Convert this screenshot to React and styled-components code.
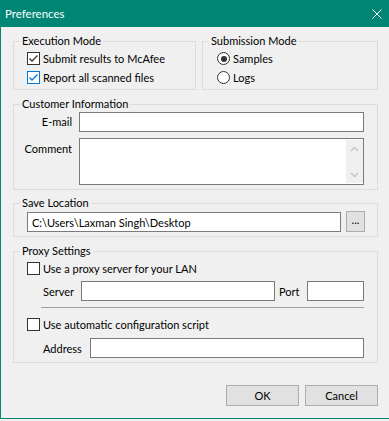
import styled, { createGlobalStyle } from "styled-components"

const Global = createGlobalStyle`
body {
  margin: 0;
  background: #f0f0f0;
}
* { box-sizing: border-box; }
`

const Window = styled.div`
width: 389px;
height: 419px;
display: flex;
flex-direction: column;
background: #f0f0f0;
border-left: 1px solid #018574;
border-bottom: 1px solid #018574;
font-family: Lato, sans-serif;
font-size: 11px;
color: #000;
`
const TitleBar = styled.div`
height: 27px;
flex: none;
display: flex;
align-items: center;
justify-content: space-between;
padding: 0 7px 0 4px;
background: #018574;
color: #fff;
font-size: 11.5px;
`
const Content = styled.div`
flex: 1;
display: flex;
flex-direction: column;
padding: 6px 11px 0 12px;
`
const TopRow = styled.div`
display: flex;
gap: 6px;
`
const Group = styled.fieldset`
margin: ${p => p.$mt || 0}px 0 0 0;
padding: 0;
min-width: 0;
border: 1px solid #dcdcdc;
width: ${p => p.$w ? p.$w + "px" : "auto"};
flex: ${p => p.$fill ? "1 1 0" : "none"};
`
const Legend = styled.legend`
margin-left: 6px;
padding: 0 2px;
line-height: 16px;
height: 16px;
`
const Stack = styled.div`
display: flex;
flex-direction: column;
padding: ${p => p.$pad};
`
const OptionRow = styled.label`
display: flex;
align-items: center;
gap: 3px;
height: 19px;
margin-top: ${p => p.$mt || 0}px;
white-space: nowrap;
`
const Box = styled.span`
width: 13px;
height: 13px;
flex: none;
display: flex;
align-items: center;
justify-content: center;
border: 1px solid ${p => p.$blue ? "#0078d7" : "#333"};
background: #fff;
`
const Round = styled.span`
width: 13px;
height: 13px;
flex: none;
display: flex;
align-items: center;
justify-content: center;
border: 1px solid #333;
border-radius: 50%;
background: #fff;
`
const Dot = styled.span`
width: 6px;
height: 6px;
border-radius: 50%;
background: #333;
`
const FormGrid = styled.div`
display: grid;
grid-template-columns: 58px 1fr;
column-gap: 7px;
row-gap: 6px;
padding: 0 13px 4px 0;
`
const FieldLabel = styled.span`
text-align: right;
line-height: 16px;
align-self: ${p => p.$top ? "start" : "center"};
margin-top: ${p => p.$top ? 3 : 0}px;
`
const TextBox = styled.input`
height: 20px;
width: ${p => p.$w ? p.$w + "px" : "auto"};
flex: ${p => p.$w ? "none" : 1};
min-width: 0;
margin: 0;
margin-top: ${p => p.$mt || 0}px;
padding: 0 4px;
border: 1px solid #7a7a7a;
background: #fff;
font-family: Lato, sans-serif;
font-size: 11px;
color: #000;
outline: none;
`
const MemoBox = styled.div`
height: 47px;
display: flex;
justify-content: flex-end;
border: 1px solid #7a7a7a;
background: #fff;
padding: 1px 0;
`
const ScrollBar = styled.div`
width: 17px;
display: flex;
flex-direction: column;
justify-content: space-between;
background: #f0f0f0;
`
const ScrollArrow = styled.div`
height: 17px;
display: flex;
align-items: center;
justify-content: center;
`
const Line = styled.div`
display: flex;
align-items: ${p => p.$align || "center"};
gap: ${p => p.$gap || 0}px;
padding: ${p => p.$pad || 0};
margin-top: ${p => p.$mt || 0}px;
`
const InlineLabel = styled.span`
width: ${p => p.$w}px;
flex: none;
padding-left: ${p => p.$pl || 0}px;
white-space: nowrap;
`
const BrowseButton = styled.button`
width: 19px;
height: 21px;
flex: none;
margin: 0;
padding: 0 0 4px;
border: 1px solid #adadad;
background: #e1e1e1;
font-family: Lato, sans-serif;
font-size: 11px;
color: #000;
`
const Separator = styled.div`
height: 1px;
margin: 6px 0 0 14px;
background: #a0a0a0;
`
const Footer = styled.div`
display: flex;
justify-content: flex-end;
gap: 6px;
margin-top: 22px;
`
const DialogButton = styled.button`
width: 73px;
height: 21px;
margin: 0;
padding: 0;
border: 1px solid #adadad;
background: #e1e1e1;
font-family: Lato, sans-serif;
font-size: 11px;
color: #000;
`

function Check({ checked, blue }) {
    const c = blue ? "#0078d7" : "#333"
    return (
        <Box $blue={blue}>
            {checked && (
                <svg width="11" height="11" viewBox="0 0 11 11">
                    <path d="M1.5 5.5 L4 8 L9.5 2.5" fill="none" stroke={c} strokeWidth="1.3" />
                </svg>
            )}
        </Box>
    )
}

function Radio({ checked }) {
    return <Round>{checked && <Dot />}</Round>
}

function Chevron({ up }) {
    return (
        <svg width="9" height="6" viewBox="0 0 9 6">
            <path d={up ? "M1 5 L4.5 1.5 L8 5" : "M1 1 L4.5 4.5 L8 1"} fill="none" stroke="#c2c2c2" strokeWidth="1.3" />
        </svg>
    )
}

export default function App() {
    return (
        <Window>
            <Global />
            <TitleBar>
                <span>Preferences</span>
                <svg width="10" height="10" viewBox="0 0 10 10">
                    <path d="M0.5 0.5 L9.5 9.5 M9.5 0.5 L0.5 9.5" stroke="#fff" strokeWidth="1" />
                </svg>
            </TitleBar>
            <Content>
                <TopRow>
                    <Group $w={183}>
                        <Legend>Execution Mode</Legend>
                        <Stack $pad="0 0 2px 13px">
                            <OptionRow><Check checked />Submit results to McAfee</OptionRow>
                            <OptionRow><Check checked blue />Report all scanned files</OptionRow>
                        </Stack>
                    </Group>
                    <Group $fill>
                        <Legend>Submission Mode</Legend>
                        <Stack $pad="0 0 2px 14px">
                            <OptionRow><Radio checked />Samples</OptionRow>
                            <OptionRow><Radio />Logs</OptionRow>
                        </Stack>
                    </Group>
                </TopRow>

                <Group $mt={6}>
                    <Legend>Customer Information</Legend>
                    <FormGrid>
                        <FieldLabel>E-mail</FieldLabel>
                        <TextBox />
                        <FieldLabel $top>Comment</FieldLabel>
                        <MemoBox>
                            <ScrollBar>
                                <ScrollArrow><Chevron up /></ScrollArrow>
                                <ScrollArrow><Chevron /></ScrollArrow>
                            </ScrollBar>
                        </MemoBox>
                    </FormGrid>
                </Group>

                <Group $mt={5}>
                    <Legend>Save Location</Legend>
                    <Line $align="flex-start" $gap={5} $pad="0 12px 4px 13px">
                        <TextBox $mt={1} defaultValue="C:\Users\Laxman Singh\Desktop" readOnly />
                        <BrowseButton>...</BrowseButton>
                    </Line>
                </Group>

                <Group $mt={6}>
                    <Legend>Proxy Settings</Legend>
                    <Stack $pad="0 13px 4px 13px">
                        <OptionRow><Check />Use a proxy server for your LAN</OptionRow>
                        <Line $mt={3} $pad="0 0 0 16px">
                            <InlineLabel $w={38}>Server</InlineLabel>
                            <TextBox />
                            <InlineLabel $w={32} $pl={4}>Port</InlineLabel>
                            <TextBox $w={57} />
                        </Line>
                        <Separator />
                        <OptionRow $mt={7}><Check />Use automatic configuration script</OptionRow>
                        <Line $mt={4} $pad="0 0 0 16px">
                            <InlineLabel $w={47}>Address</InlineLabel>
                            <TextBox />
                        </Line>
                    </Stack>
                </Group>

                <Footer>
                    <DialogButton>OK</DialogButton>
                    <DialogButton>Cancel</DialogButton>
                </Footer>
            </Content>
        </Window>
    )
}
